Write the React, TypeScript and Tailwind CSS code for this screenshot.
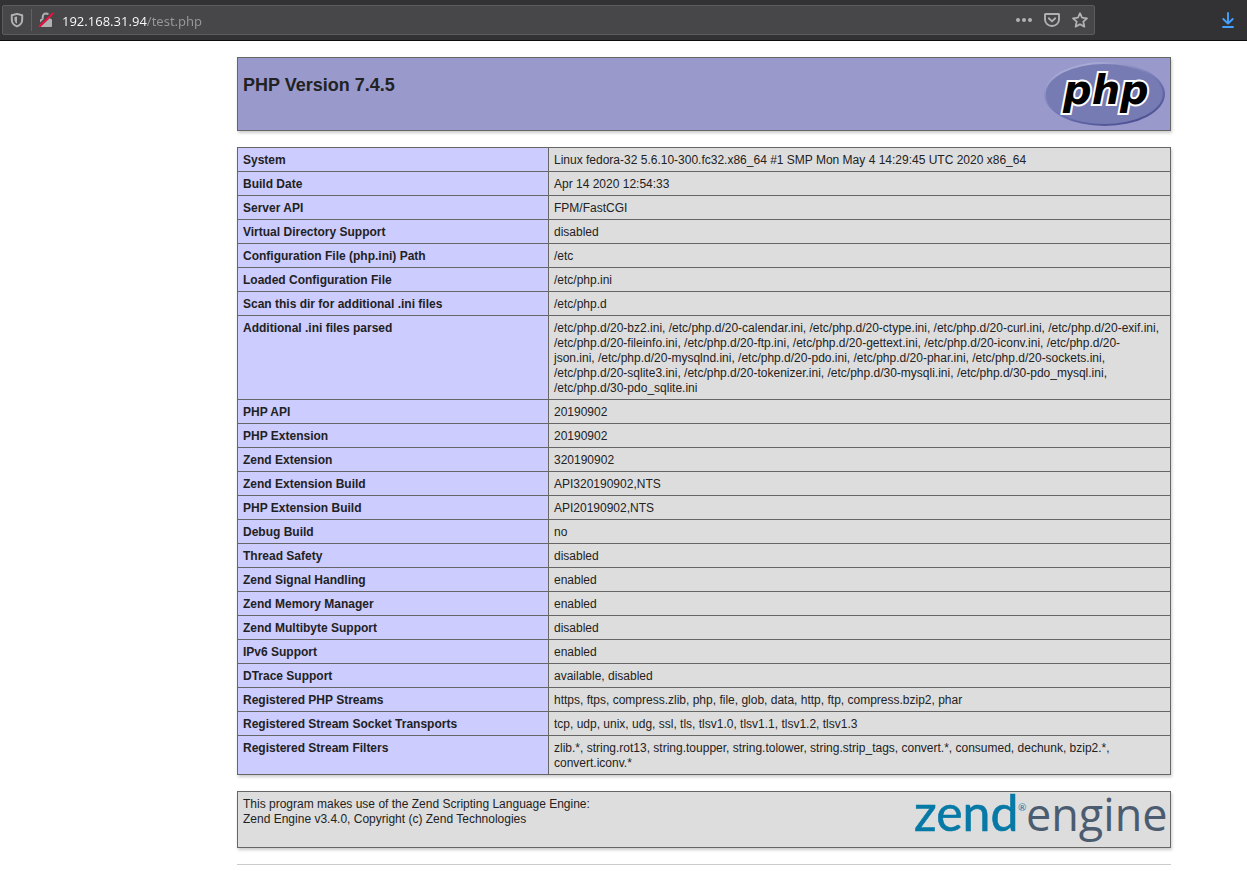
import { useState } from "react"

type InfoRow = {
	label: string
	value: string
}

const rows: InfoRow[] = [
	{
		label: "System",
		value:
			"Linux fedora-32 5.6.10-300.fc32.x86_64 #1 SMP Mon May 4 14:29:45 UTC 2020 x86_64",
	},
	{ label: "Build Date", value: "Apr 14 2020 12:54:33" },
	{ label: "Server API", value: "FPM/FastCGI" },
	{ label: "Virtual Directory Support", value: "disabled" },
	{ label: "Configuration File (php.ini) Path", value: "/etc" },
	{ label: "Loaded Configuration File", value: "/etc/php.ini" },
	{ label: "Scan this dir for additional .ini files", value: "/etc/php.d" },
	{
		label: "Additional .ini files parsed",
		value:
			"/etc/php.d/20-bz2.ini, /etc/php.d/20-calendar.ini, /etc/php.d/20-ctype.ini, /etc/php.d/20-curl.ini, /etc/php.d/20-exif.ini, /etc/php.d/20-fileinfo.ini, /etc/php.d/20-ftp.ini, /etc/php.d/20-gettext.ini, /etc/php.d/20-iconv.ini, /etc/php.d/20-json.ini, /etc/php.d/20-mysqlnd.ini, /etc/php.d/20-pdo.ini, /etc/php.d/20-phar.ini, /etc/php.d/20-sockets.ini, /etc/php.d/20-sqlite3.ini, /etc/php.d/20-tokenizer.ini, /etc/php.d/30-mysqli.ini, /etc/php.d/30-pdo_mysql.ini, /etc/php.d/30-pdo_sqlite.ini",
	},
	{ label: "PHP API", value: "20190902" },
	{ label: "PHP Extension", value: "20190902" },
	{ label: "Zend Extension", value: "320190902" },
	{ label: "Zend Extension Build", value: "API320190902,NTS" },
	{ label: "PHP Extension Build", value: "API20190902,NTS" },
	{ label: "Debug Build", value: "no" },
	{ label: "Thread Safety", value: "disabled" },
	{ label: "Zend Signal Handling", value: "enabled" },
	{ label: "Zend Memory Manager", value: "enabled" },
	{ label: "Zend Multibyte Support", value: "disabled" },
	{ label: "IPv6 Support", value: "enabled" },
	{ label: "DTrace Support", value: "available, disabled" },
	{
		label: "Registered PHP Streams",
		value:
			"https, ftps, compress.zlib, php, file, glob, data, http, ftp, compress.bzip2, phar",
	},
	{
		label: "Registered Stream Socket Transports",
		value: "tcp, udp, unix, udg, ssl, tls, tlsv1.0, tlsv1.1, tlsv1.2, tlsv1.3",
	},
	{
		label: "Registered Stream Filters",
		value:
			"zlib.*, string.rot13, string.toupper, string.tolower, string.strip_tags, convert.*, consumed, dechunk, bzip2.*, convert.iconv.*",
	},
]

function ShieldIcon() {
	return (
		<svg viewBox="0 0 16 16" className="size-4" fill="none">
			<path
				d="M8 1.900 13.200 3.300V7.400c0 3.400-2 5.800-5.200 7C4.800 13.200 2.800 10.800 2.800 7.400V3.300Z"
				stroke="#b1b1b3"
				strokeWidth="2"
				strokeLinejoin="round"
			/>
			<path d="M8 4.400v7.400c-1.700-1-2.500-2.500-2.500-4.500V5Z" fill="#b1b1b3" />
		</svg>
	)
}

function InsecureIcon() {
	return (
		<svg viewBox="0 0 16 16" className="size-4" fill="none">
			<path
				d="M4.700 8V4.900a3.300 3.300 0 0 1 6.600 0V8"
				stroke="#b1b1b3"
				strokeWidth="2"
			/>
			<rect x="2" y="7" width="12" height="8" rx="1" fill="#b1b1b3" />
			<path d="M0.500 14.500 14.500 1" stroke="#474749" strokeWidth="3.600" />
			<path
				d="M1.600 14.200 14.600 1.600"
				stroke="#f0103f"
				strokeWidth="2"
				strokeLinecap="round"
			/>
		</svg>
	)
}

function DotsIcon() {
	return (
		<svg viewBox="0 0 16 16" className="size-4" fill="#b1b1b3">
			<circle cx="2" cy="8" r="2" />
			<circle cx="8" cy="8" r="2" />
			<circle cx="14" cy="8" r="2" />
		</svg>
	)
}

function PocketIcon() {
	return (
		<svg
			viewBox="0 0 16 16"
			className="size-4"
			fill="none"
			stroke="#b1b1b3"
			strokeWidth="1.900"
			strokeLinecap="round"
			strokeLinejoin="round"
		>
			<path d="M1.500 2h13q.500 0 .500.500V7.500a7 6.500 0 0 1-14 0V2.500Q1 2 1.500 2Z" />
			<path d="M4.800 6.300 8 9.400l3.200-3.100" />
		</svg>
	)
}

function StarIcon() {
	return (
		<svg
			viewBox="0 0 16 16"
			className="size-4"
			fill="none"
			stroke="#b1b1b3"
			strokeWidth="1.800"
			strokeLinejoin="round"
		>
			<path d="M8 1.200 10 5.700l5 .600-3.700 3.300 1.100 5L8 12.200l-4.400 2.400 1.100-5L1 6.300l5-.600Z" />
		</svg>
	)
}

function DownloadIcon() {
	return (
		<svg
			viewBox="0 0 16 16"
			className="size-4"
			fill="none"
			stroke="#45a1ff"
			strokeWidth="1.900"
			strokeLinecap="round"
			strokeLinejoin="round"
		>
			<path d="M8 1v10.500M3.300 7 8 11.700 12.700 7M3 15h10" />
		</svg>
	)
}

function PhpLogo() {
	return (
		<svg
			viewBox="0 0 121 64"
			className="h-16 w-[121px] overflow-visible"
			role="img"
		>
			<defs>
				<linearGradient id="rim" x1="0.2" y1="0" x2="0.8" y2="1">
					<stop offset="0" stopColor="#b4b7dc" />
					<stop offset="0.35" stopColor="#8488bd" />
					<stop offset="0.6" stopColor="#6a6eae" />
					<stop offset="1" stopColor="#484b8e" />
				</linearGradient>
			</defs>
			<ellipse cx="60.5" cy="32" rx="60.5" ry="32" fill="url(#rim)" />
			<ellipse cx="60.300" cy="32" rx="58.500" ry="30" fill="#777bb3" />
			<text
				x="19"
				y="42"
				fontSize="40"
				fill="#000"
				stroke="#fff"
				strokeWidth="4"
				strokeLinejoin="miter"
				paintOrder="stroke"
				className="font-['DejaVu_Sans',sans-serif] font-bold italic"
			>
				php
			</text>
		</svg>
	)
}

function ZendLogo() {
	return (
		<svg
			viewBox="0 0 252 55"
			className="h-[55px] w-[252px] overflow-visible"
			role="img"
		>
			<text
				x="0"
				y="39"
				fontSize="50"
				fill="#0679a6"
				stroke="#0679a6"
				strokeWidth="0.6"
				className="font-['Lato',sans-serif]"
			>
				zend
			</text>
			<text
				x="104"
				y="19"
				fontSize="10"
				fill="#0679a6"
				className="font-['Lato',sans-serif]"
			>
				®
			</text>
			<text
				x="112"
				y="39"
				fontSize="45"
				fill="#4c5c70"
				className="font-['Open_Sans',sans-serif]"
			>
				engine
			</text>
		</svg>
	)
}

function Toolbar() {
	const [url, setUrl] = useState("192.168.31.94/test.php")

	return (
		<header className="flex h-[41px] items-center border-b border-[#0c0c0d] bg-[#323234] pr-[11px] pl-0.5">
			<div className="flex h-[30px] flex-1 items-center rounded-xs border border-[#5c5c5e] bg-[#474749]">
				<button aria-label="Tracking protection" className="px-1.5">
					<ShieldIcon />
				</button>
				<div className="h-[22px] w-px bg-[#606066]" />
				<button aria-label="Connection not secure" className="px-1.5">
					<InsecureIcon />
				</button>
				{/* host part is bright, the path is dimmed */}
				<input
					type="text"
					aria-label="Address"
					value={url}
					onChange={(e) => setUrl(e.target.value)}
					className="ml-0.5 h-6 min-w-0 flex-1 bg-linear-to-r from-[#f9f9fa] from-[85px] to-[#98989a] to-[85px] bg-clip-text pt-px font-['Noto_Sans',sans-serif] text-[13px] text-transparent caret-white outline-none"
				/>
				<div className="flex gap-3 pr-1.5">
					<button aria-label="Page actions">
						<DotsIcon />
					</button>
					<button aria-label="Save to Pocket">
						<PocketIcon />
					</button>
					<button aria-label="Bookmark this page">
						<StarIcon />
					</button>
				</div>
			</div>
			<button aria-label="Downloads" className="ml-[125px]">
				<DownloadIcon />
			</button>
		</header>
	)
}

export default function App() {
	return (
		<div className="min-h-screen bg-white font-['Liberation_Sans',Arial,sans-serif] text-xs leading-[15px] text-[#222]">
			<Toolbar />
			<main className="flex flex-col gap-4 pt-4 pr-[76px] pl-[237px]">
				<div className="flex h-[74px] items-start justify-between border border-[#666] bg-[#9999cc] py-1 pr-[5px] pl-[5px] shadow-[1px_2px_3px_#ccc]">
					<h1 className="pt-3 text-lg leading-[22px] font-bold">
						PHP Version 7.4.5
					</h1>
					<a href="http://www.php.net/" aria-label="PHP logo">
						<PhpLogo />
					</a>
				</div>

				<table className="w-full border-collapse shadow-[1px_2px_3px_#ccc]">
					<tbody>
						{rows.map((row) => (
							<tr key={row.label}>
								<th
									scope="row"
									className="w-1/3 border border-[#666] bg-[#ccccff] px-[5px] pt-[5px] pb-[3px] text-left align-top font-bold"
								>
									{row.label}
								</th>
								<td className="border border-[#666] bg-[#ddd] pt-[5px] pr-2.5 pb-[3px] pl-[5px] align-top">
									{row.value}
								</td>
							</tr>
						))}
					</tbody>
				</table>

				<div className="flex h-[57px] items-start justify-between border border-[#666] bg-[#ddd] pl-[5px] pr-1 shadow-[1px_2px_3px_#ccc]">
					<p className="pt-[5px]">
						This program makes use of the Zend Scripting Language Engine:
						<br />
						Zend Engine v3.4.0, Copyright (c) Zend Technologies
					</p>
					<a href="http://www.zend.com/" aria-label="Zend logo">
						<ZendLogo />
					</a>
				</div>

				<hr className="border-t border-[#ccc]" />
			</main>
		</div>
	)
}
